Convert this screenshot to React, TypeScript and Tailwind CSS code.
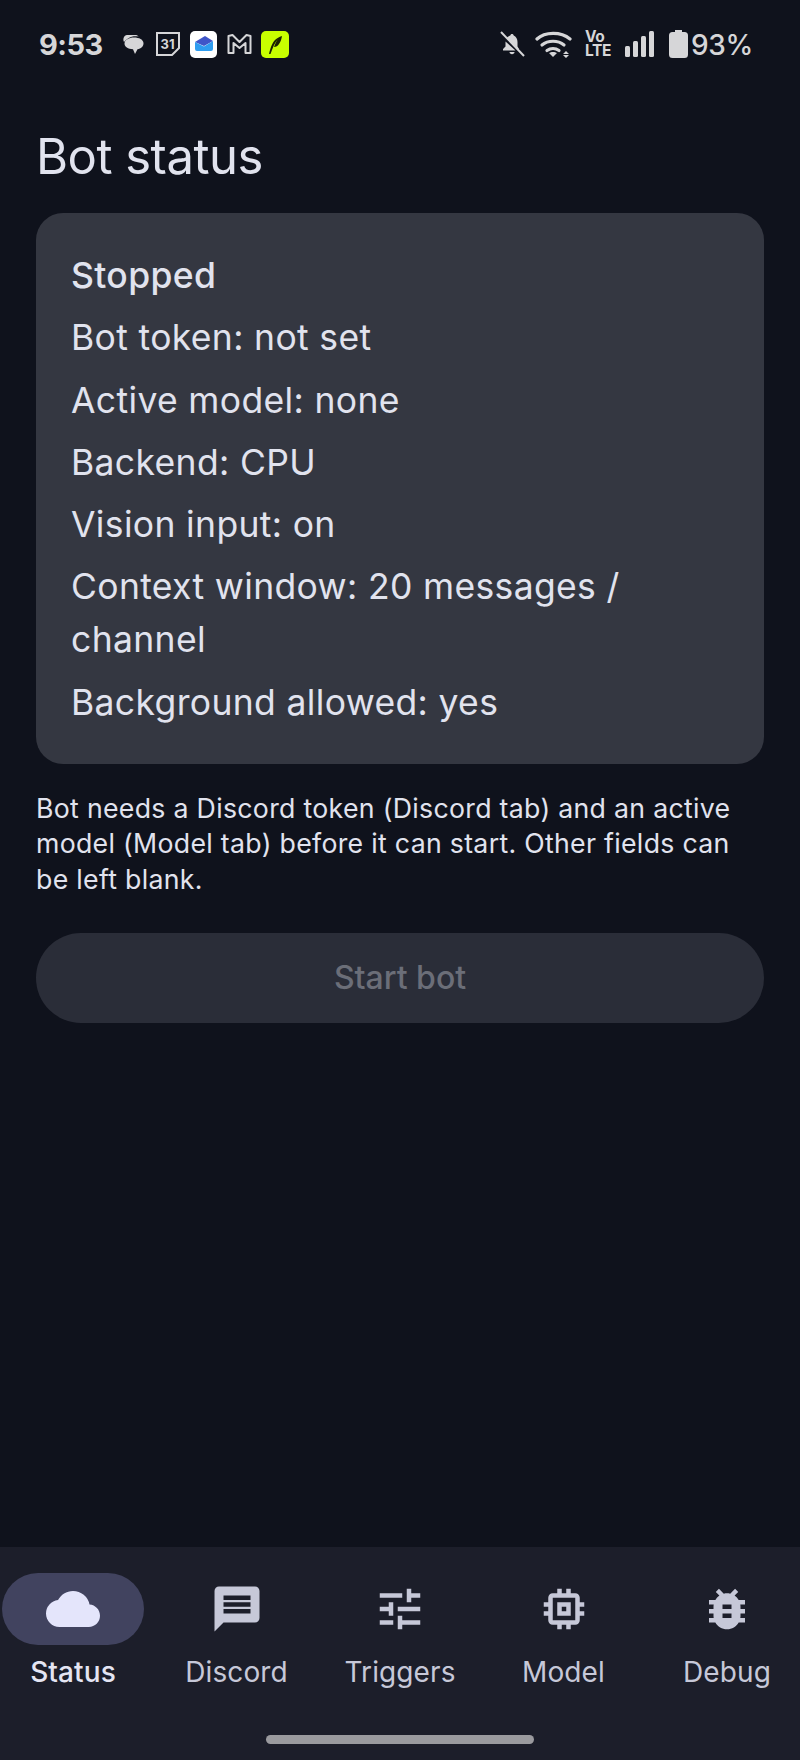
import { MdBugReport, MdCloud, MdMemory, MdMessage, MdTune } from "react-icons/md";
import type { IconType } from "react-icons";

const statusLines = [
  "Bot token: not set",
  "Active model: none",
  "Backend: CPU",
  "Vision input: on",
  "Context window: 20 messages / channel",
  "Background allowed: yes",
];

const tabs: { label: string; icon: IconType; active?: boolean }[] = [
  { label: "Status", icon: MdCloud, active: true },
  { label: "Discord", icon: MdMessage },
  { label: "Triggers", icon: MdTune },
  { label: "Model", icon: MdMemory },
  { label: "Debug", icon: MdBugReport },
];

const StatusBar = () => {
  return (
    <div className="flex h-[88px] shrink-0 items-center justify-between pl-[39px] pr-[47px] text-[#d6d6d8]">
      <div className="flex items-center">
        <span className="w-[61px] text-[29px] font-bold leading-none tracking-[-0.5px]">9:53</span>
        <svg className="ml-[21px]" width="24" height="24" viewBox="0 0 24 24" fill="#d6d6d8">
          <path d="M6 3h8c2 0 3 .6 3.600 1.600C15 4 10 4.200 7 6.500 4.500 8.400 3.500 9.500 3 10 1.500 7 3 3 6 3z" />
          <path d="M13 5.500c5 0 9.500 2 9.500 6 0 3-2.500 5.200-6 5.800L14 22l-2-4.800C7 17 3.500 15 3.500 11.500c0-3.500 4.500-6 9.500-6z" />
        </svg>
        <svg className="ml-[10px]" width="26" height="26" viewBox="0 0 26 26" fill="none">
          <path d="M2 2h22v15l-7 7H2z" stroke="#d6d6d8" strokeWidth="2" />
          <text x="5.500" y="18" fontSize="13" fontWeight="700" fill="#d6d6d8" fontFamily="Inter, sans-serif">31</text>
        </svg>
        <svg className="ml-[9px]" width="27" height="27" viewBox="0 0 27 27">
          <rect width="27" height="27" rx="5" fill="#ffffff" />
          <path d="M5 11l10-6 8 5-9 5z" fill="#3f55c8" />
          <path d="M5 11l9 4.500 9-5.500v8a2 2 0 0 1-2 2H7a2 2 0 0 1-2-2z" fill="#2f9df0" />
        </svg>
        <svg className="ml-[10px]" width="25" height="22" viewBox="0 0 25 22" fill="none">
          <path d="M1.500 20V3l4-1 7 7 7-7 4 1v17h-5V10l-6 5-6-5v10z" stroke="#d6d6d8" strokeWidth="2" strokeLinejoin="round" />
        </svg>
        <svg className="ml-[9px]" width="28" height="27" viewBox="0 0 28 27">
          <rect width="28" height="27" rx="5" fill="#c8ff00" />
          <path d="M8 23c1-5 3-11 6-14 2-2 4-3 7-4-.5 3-1 5-3 8-1 2-3 3-5 3 1-3 2-5 4-8-3 3-5 8-7.500 15z" fill="#1a2200" />
        </svg>
      </div>
      <div className="flex items-center">
        <svg width="26" height="26" viewBox="0 0 26 26" fill="#d6d6d8">
          <path d="M13 3c-1 0-1.600.700-1.700 1.600C9.500 5.100 8.300 6 7.600 7.300l12 12.200H20v-1.500l-1.500-2.500V11c0-3-1.500-5.500-3.800-6.400C14.600 3.700 14 3 13 3z" />
          <path d="M6.500 10.500L6.500 15.500 4 18v1.500h12.500z" />
          <path d="M10.500 21h5c0 1.300-1.100 2.200-2.500 2.200S10.500 22.300 10.500 21z" />
          <path d="M2 1l23 24" stroke="#d6d6d8" strokeWidth="2" />
        </svg>
        <svg className="ml-[10px]" width="38" height="27" viewBox="0 0 38 27" fill="none" stroke="#d6d6d8" strokeWidth="3.200" strokeLinecap="round">
          <path d="M2 8c8-7.500 24-7.500 33 0" />
          <path d="M7 14c6-5 16-5 22 0" />
          <path d="M12 19.500c3.500-2.500 8.500-2.500 12 0" />
          <path d="M18 26l-4-4c2-1.500 6-1.500 8 0z" fill="#d6d6d8" stroke="none" />
          <path d="M31 20l-3 3h6zM31 27l-3-3h6z" fill="#d6d6d8" stroke="none" />
        </svg>
        <span className="ml-[12px] w-[25px] text-left text-[15.500px] font-bold leading-[14px] tracking-[-0.3px]">
          Vo
          <br />
          LTE
        </span>
        <svg className="ml-[15px]" width="29" height="26" viewBox="0 0 29 26" fill="#d6d6d8">
          <rect x="0" y="15" width="5" height="11" rx="1.500" />
          <rect x="8" y="10" width="5" height="16" rx="1.500" />
          <rect x="16" y="5" width="5" height="21" rx="1.500" />
          <rect x="24" y="0" width="5" height="26" rx="1.500" />
        </svg>
        <svg className="ml-[15px]" width="19" height="28" viewBox="0 0 19 28" fill="#d6d6d8">
          <path d="M6 0h7v2h2.500A3.500 3.500 0 0 1 19 5.500v19a3.500 3.500 0 0 1-3.500 3.500h-12A3.500 3.500 0 0 1 0 24.500v-19A3.500 3.500 0 0 1 3.500 2H6z" />
        </svg>
        <span className="ml-[3px] mt-[2px] text-[28px] font-medium leading-none tracking-[-0.3px]">93%</span>
      </div>
    </div>
  );
};

const App = () => {
  return (
    <div className="flex h-[1760px] w-[800px] flex-col overflow-hidden bg-[#0f121c] [font-family:Inter,sans-serif] text-[#e1e3ee]">
      <StatusBar />
      <main className="flex-1 px-[36px] pt-[45px]">
        <h1 className="text-[49px] leading-[48px] font-normal tracking-[-0.5px]">Bot status</h1>
        <div className="mt-[32px] flex flex-col gap-[9.300px] rounded-[27px] bg-[#343741] pb-[35px] pl-[35px] pr-[35px] pt-[36px] text-[35.500px] leading-[53px] tracking-[0.35px]">
          <p className="font-medium">Stopped</p>
          {statusLines.map((line) => (
            <p key={line}>{line}</p>
          ))}
        </div>
        <p className="mt-[27px] text-[26.700px] leading-[35.500px] tracking-[0.3px]">
          Bot needs a Discord token (Discord tab) and an active model (Model tab) before it can start. Other fields can be left blank.
        </p>
        <button className="mt-[36px] h-[90px] w-full rounded-full bg-[#2a2d38] text-[32px] font-medium text-[#6b6e78]">
          Start bot
        </button>
      </main>
      <nav className="flex h-[213px] shrink-0 justify-between bg-[#1c1e2a] px-[2px] pt-[26px]">
        {tabs.map(({ label, icon: Icon, active }) => (
          <div key={label} className="flex w-[142px] flex-col items-center">
            <div className={`flex h-[72px] w-full items-center justify-center rounded-full ${active ? "bg-[#41435f] text-[#e4e5fb]" : "text-[#c6c8d8]"}`}>
              <Icon size={54} />
            </div>
            <span className={`mt-[9px] text-[28px] leading-[36px] tracking-[0.1px] ${active ? "font-medium text-[#e4e5f3]" : "text-[#c6c8d8]"}`}>
              {label}
            </span>
          </div>
        ))}
      </nav>
      <div className="relative">
        <div className="absolute bottom-[16px] left-[266px] h-[9px] w-[268px] rounded-full bg-[#9a9a9e]" />
      </div>
    </div>
  );
};

export default App;
